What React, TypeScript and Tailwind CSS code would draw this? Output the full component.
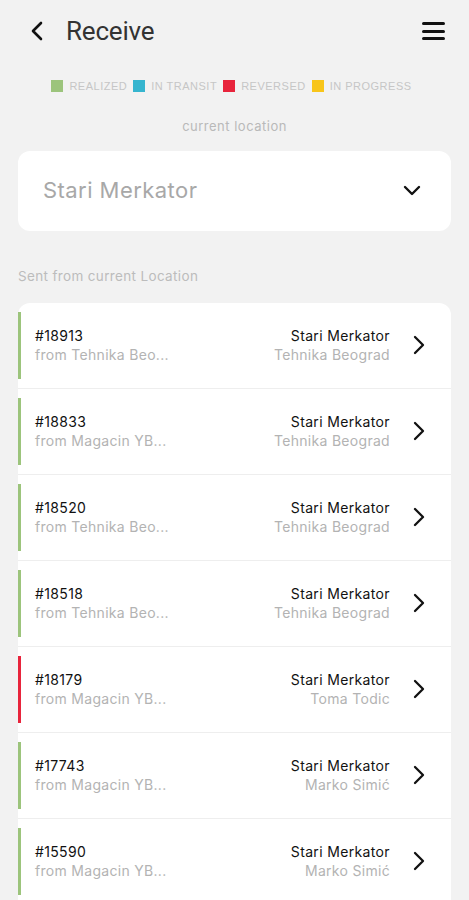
import React from "react";

const rows = [
  { id: "#18913", from: "from Tehnika Beo...", to: "Tehnika Beograd", color: "bg-[#9cc47c]" },
  { id: "#18833", from: "from Magacin YB...", to: "Tehnika Beograd", color: "bg-[#9cc47c]" },
  { id: "#18520", from: "from Tehnika Beo...", to: "Tehnika Beograd", color: "bg-[#9cc47c]" },
  { id: "#18518", from: "from Tehnika Beo...", to: "Tehnika Beograd", color: "bg-[#9cc47c]" },
  { id: "#18179", from: "from Magacin YB...", to: "Toma Todic", color: "bg-[#e8243c]" },
  { id: "#17743", from: "from Magacin YB...", to: "Marko Simić", color: "bg-[#9cc47c]" },
  { id: "#15590", from: "from Magacin YB...", to: "Marko Simić", color: "bg-[#9cc47c]" },
];

const legend = [
  { label: "REALIZED", color: "bg-[#9cc47c]" },
  { label: "IN TRANSIT", color: "bg-[#36b5cf]" },
  { label: "REVERSED", color: "bg-[#e8243c]" },
  { label: "IN PROGRESS", color: "bg-[#f8c51a]" },
];

export default function App() {
  return (
    <div
      className="w-[469px] h-[900px] overflow-hidden bg-[#f2f2f2] flex flex-col"
      style={{ fontFamily: "Inter, 'Liberation Sans', sans-serif" }}
    >
      {/* Header */}
      <div className="h-[62px] shrink-0 flex items-center pl-[29px] pr-[24px]">
        <svg width="16" height="20" viewBox="0 0 16 20" fill="none">
          <path d="M12 2 L4 10 L12 18" stroke="#111" strokeWidth="2.6" strokeLinecap="round" strokeLinejoin="round" />
        </svg>
        <span
          className="ml-[21px] text-[26px] text-[#333] tracking-[-0.2px]"
          style={{ fontFamily: "Roboto, 'Liberation Sans', sans-serif" }}
        >
          Receive
        </span>
        <div className="ml-auto flex flex-col gap-[4.5px] w-[23px]">
          <div className="h-[3px] bg-[#111] rounded-full" />
          <div className="h-[3px] bg-[#111] rounded-full" />
          <div className="h-[3px] bg-[#111] rounded-full" />
        </div>
      </div>

      {/* Legend */}
      <div className="mt-[17px] h-[14px] flex items-center justify-center gap-[6px] pr-[6px]">
        {legend.map((l) => (
          <div key={l.label} className="flex items-center gap-[6px]">
            <div className={`w-[12px] h-[12px] ${l.color}`} />
            <span
              className="text-[11px] text-[#c6c6c6] tracking-[0.5px]"
              style={{ fontFamily: "'Liberation Sans', sans-serif" }}
            >
              {l.label}
            </span>
          </div>
        ))}
      </div>

      <div className="mt-[24px] text-center text-[13px] text-[#b9b9b9] tracking-[0.5px]">
        current location
      </div>

      {/* Select */}
      <div className="mt-[14px] mx-[18px] h-[80px] shrink-0 bg-white rounded-[12px] flex items-center pl-[25px] pr-[30px]">
        <span className="text-[22px] text-[#a8a8a8] tracking-[0.45px]">Stari Merkator</span>
        <svg className="ml-auto" width="18" height="11" viewBox="0 0 18 11" fill="none">
          <path d="M2 2 L9 9 L16 2" stroke="#111" strokeWidth="2.4" strokeLinecap="round" strokeLinejoin="round" />
        </svg>
      </div>

      <div className="mt-[35px] pl-[18px] text-[13.5px] text-[#bcbcbc] tracking-[0.35px]">
        Sent from current Location
      </div>

      {/* List */}
      <div className="mt-[17px] mx-[18px] bg-white rounded-t-[12px] flex flex-col">
        {rows.map((r) => (
          <div key={r.id} className="h-[86px] flex items-stretch border-b border-[#eeeeee] shrink-0">
            <div className={`w-[3px] my-[9px] ${r.color}`} />
            <div className="flex-1 flex items-center pl-[14px] pr-[25px]">
              <div className="flex flex-col gap-[1px]">
                <span className="text-[14px] font-normal text-[#111] tracking-[0.35px] leading-[18px]">{r.id}</span>
                <span className="text-[14px] text-[#b3b3b3] tracking-[0.3px] leading-[18px]">{r.from}</span>
              </div>
              <div className="ml-auto flex flex-col items-end gap-[1px]">
                <span className="text-[14px] font-normal text-[#111] tracking-[0.35px] leading-[18px]">Stari Merkator</span>
                <span className="text-[14px] text-[#b3b3b3] tracking-[0.3px] leading-[18px]">{r.to}</span>
              </div>
              <svg className="ml-[22px]" width="14" height="20" viewBox="0 0 14 20" fill="none">
                <path d="M3 2 L11 10 L3 18" stroke="#111" strokeWidth="2.3" strokeLinecap="round" strokeLinejoin="round" />
              </svg>
            </div>
          </div>
        ))}
      </div>
    </div>
  );
}
